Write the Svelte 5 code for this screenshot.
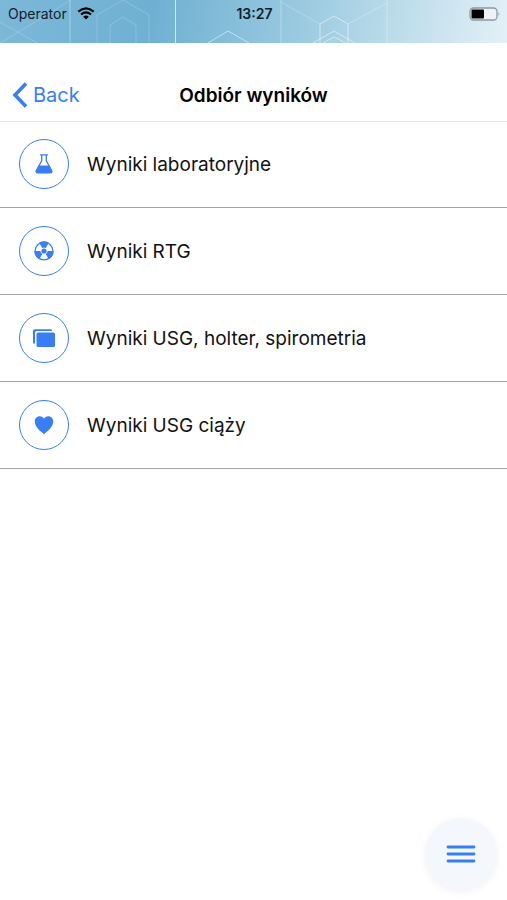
<script lang="ts">
	type Icon = "flask" | "radiation" | "albums" | "heart";

	const items: { icon: Icon, label: string }[] = [
		{ icon: "flask", label: "Wyniki laboratoryjne" },
		{ icon: "radiation", label: "Wyniki RTG" },
		{ icon: "albums", label: "Wyniki USG, holter, spirometria" },
		{ icon: "heart", label: "Wyniki USG ciąży" },
	];
</script>

{#snippet glyph(icon: Icon)}
	<svg class="glyph" viewBox="0 0 24 24" aria-hidden="true">
		{#if icon == "flask"}
			<path d="M8.500 2.800h7M9.700 2.800v6L4.500 18.300c-.9 1.600-.3 2.600 1.200 2.600h12.600c1.500 0 2.100-1 1.200-2.600L14.300 8.800v-6" fill="none" stroke="currentColor" stroke-width="1.300" stroke-linecap="round" />
			<path d="M6.800 13.500h10.400l2.700 5c.7 1.400 0 2.500-1.500 2.500H5.600c-1.500 0-2.200-1.100-1.500-2.500z" fill="currentColor" />
		{:else if icon == "radiation"}
			<circle cx="12" cy="12" r="8.900" fill="none" stroke="currentColor" stroke-width="1.300" />
			{#each [0, 120, 240] as angle}
				<path d="M10.200 8.900 7.200 3.700A9.500 9.500 0 0 1 16.800 3.700L13.800 8.900A3.600 3.600 0 0 0 10.200 8.900z" fill="currentColor" transform="rotate({angle} 12 12)" />
			{/each}
			<circle cx="12" cy="12" r="2.600" fill="currentColor" />
		{:else if icon == "albums"}
			<path d="M1 17.500V5q0-1.800 1.800-1.800h15.700q1.500 0 1.700 1.700H5Q3 4.900 3 6.900v10.600z" fill="currentColor" />
			<rect x="4.500" y="6.500" width="18.500" height="14.500" rx="1.500" fill="currentColor" />
		{:else}
			<path d="M12 21.200C8.800 18.200 2.800 14.300 2.800 8.500 2.800 5.300 5 3.200 7.700 3.200c1.900 0 3.400.9 4.300 2.500.9-1.600 2.400-2.500 4.300-2.500 2.700 0 4.900 2.100 4.900 5.300 0 5.800-6 9.700-9.200 12.700z" fill="currentColor" />
		{/if}
	</svg>
{/snippet}

<div class="screen">
	<div class="status">
		<svg class="pattern" viewBox="0 0 507 43" preserveAspectRatio="none" aria-hidden="true">
			<g fill="none" stroke="#fff">
				<path d="M70 0v43M281 0v43M387 0v43" opacity=".35" />
				<path d="M175.500 0v43" opacity=".7" />
				<path d="M97 43V15L123 0L149 15V43M110 43V25L123 17L136 25V43M0 22L37 43M0 43L55 10L70 0" opacity=".2" />
				<path d="M208 43L228 31L249 43M313 43L334 31L355 43M320 43V24L334 16L348 24V43M323 43L334 37L346 43" opacity=".5" />
				<path d="M281 2L320 24M348 24L387 3" opacity=".25" />
			</g>
		</svg>
		<span class="carrier">
			Operator
			<svg class="wifi" viewBox="0 0 18 13" aria-hidden="true">
				<path d="M1.300 4.600Q9-2 16.700 4.600M4 7.500Q9 3.300 14 7.500" fill="none" stroke="currentColor" stroke-width="2.200" />
				<path d="M6.200 9.700Q9 7.400 11.800 9.700L9 12.600z" fill="currentColor" />
			</svg>
		</span>
		<time>13:27</time>
		<svg class="battery" viewBox="0 0 32 14" aria-hidden="true">
			<rect x="1" y="1" width="27" height="12" rx="3.500" fill="#fff" fill-opacity=".4" stroke="#8f989d" stroke-width="1.300" />
			<rect x="2.500" y="2.500" width="12.500" height="9" rx="1" fill="#000" />
			<path d="M29.600 4.700Q31.400 7 29.600 9.300z" fill="#8f989d" />
		</svg>
	</div>

	<header>
		<button class="back">
			<svg viewBox="0 0 16 26" aria-hidden="true">
				<path d="M14 1.500L3 13L14 24.500" fill="none" stroke="currentColor" stroke-width="3.600" />
			</svg>
			Back
		</button>
		<h1>Odbiór wyników</h1>
	</header>

	<main>
		{#each items as item}
			<button class="row">
				<span class="ring">{@render glyph(item.icon)}</span>
				{item.label}
			</button>
		{/each}
	</main>

	<button class="menu" aria-label="Menu">
		<svg viewBox="0 0 30 20" aria-hidden="true">
			<path d="M2 3H28M2 10H28M2 17H28" stroke="currentColor" stroke-width="2.800" stroke-linecap="round" />
		</svg>
	</button>
</div>

<style>
	:global(body) {
		margin: 0;
		background: #fff;
	}

	.screen {
		--blue: #387ef5;
		min-height: 100vh;
		font-family: Inter, "Liberation Sans", sans-serif;
		color: #111;
	}

	button {
		padding: 0;
		border: 0;
		background: none;
		font: inherit;
		color: inherit;
		cursor: pointer;
	}

	svg {
		display: block;
		flex: none;
	}

	.status {
		position: relative;
		display: grid;
		grid-template-columns: 1fr auto 1fr;
		align-items: center;
		box-sizing: border-box;
		height: 43px;
		padding: 0 6px 16px 8px;
		background: linear-gradient(100deg, #7cb8d8 0%, #6fb0d2 30%, #93c6de 55%, #bcdcea 78%, #e3f0f8 100%);
		font-size: 14px;
		color: #10202a;
	}

	.status > :not(.pattern) {
		position: relative;
	}

	.pattern {
		position: absolute;
		inset: 0;
		width: 100%;
		height: 100%;
	}

	.carrier {
		display: flex;
		align-items: center;
		gap: 10px;
	}

	.wifi {
		width: 18px;
		height: 13px;
		color: #000;
	}

	time {
		font-weight: 600;
	}

	.battery {
		justify-self: end;
		width: 32px;
		height: 14px;
	}

	header {
		display: grid;
		grid-template-columns: 1fr auto 1fr;
		align-items: center;
		box-sizing: border-box;
		height: 78px;
		padding: 26px 12px 0;
		box-shadow: 0 1px #e6e6e6;
	}

	.back {
		display: flex;
		align-items: center;
		justify-self: start;
		gap: 5px;
		font-size: 20px;
		color: var(--blue);
	}

	.back svg {
		width: 16px;
		height: 26px;
	}

	h1 {
		margin: 0;
		font-size: 19px;
		font-weight: 600;
		color: #000;
	}

	.row {
		display: flex;
		align-items: center;
		gap: 18px;
		box-sizing: border-box;
		width: 100%;
		height: 87px;
		padding: 0 19px;
		border-bottom: 1px solid #a4a4a4;
		font-size: 19px;
		text-align: left;
	}

	.ring {
		display: grid;
		place-items: center;
		box-sizing: border-box;
		width: 50px;
		height: 50px;
		border: 1px solid var(--blue);
		border-radius: 50%;
		color: var(--blue);
	}

	.glyph {
		width: 24px;
		height: 24px;
	}

	.menu {
		position: fixed;
		right: 10px;
		bottom: 10px;
		display: grid;
		place-items: center;
		width: 72px;
		height: 72px;
		border-radius: 50%;
		background: #f4f7fc;
		box-shadow: 0 2px 8px rgba(0, 0, 0, .06);
		color: var(--blue);
	}

	.menu svg {
		width: 30px;
		height: 20px;
	}
</style>
